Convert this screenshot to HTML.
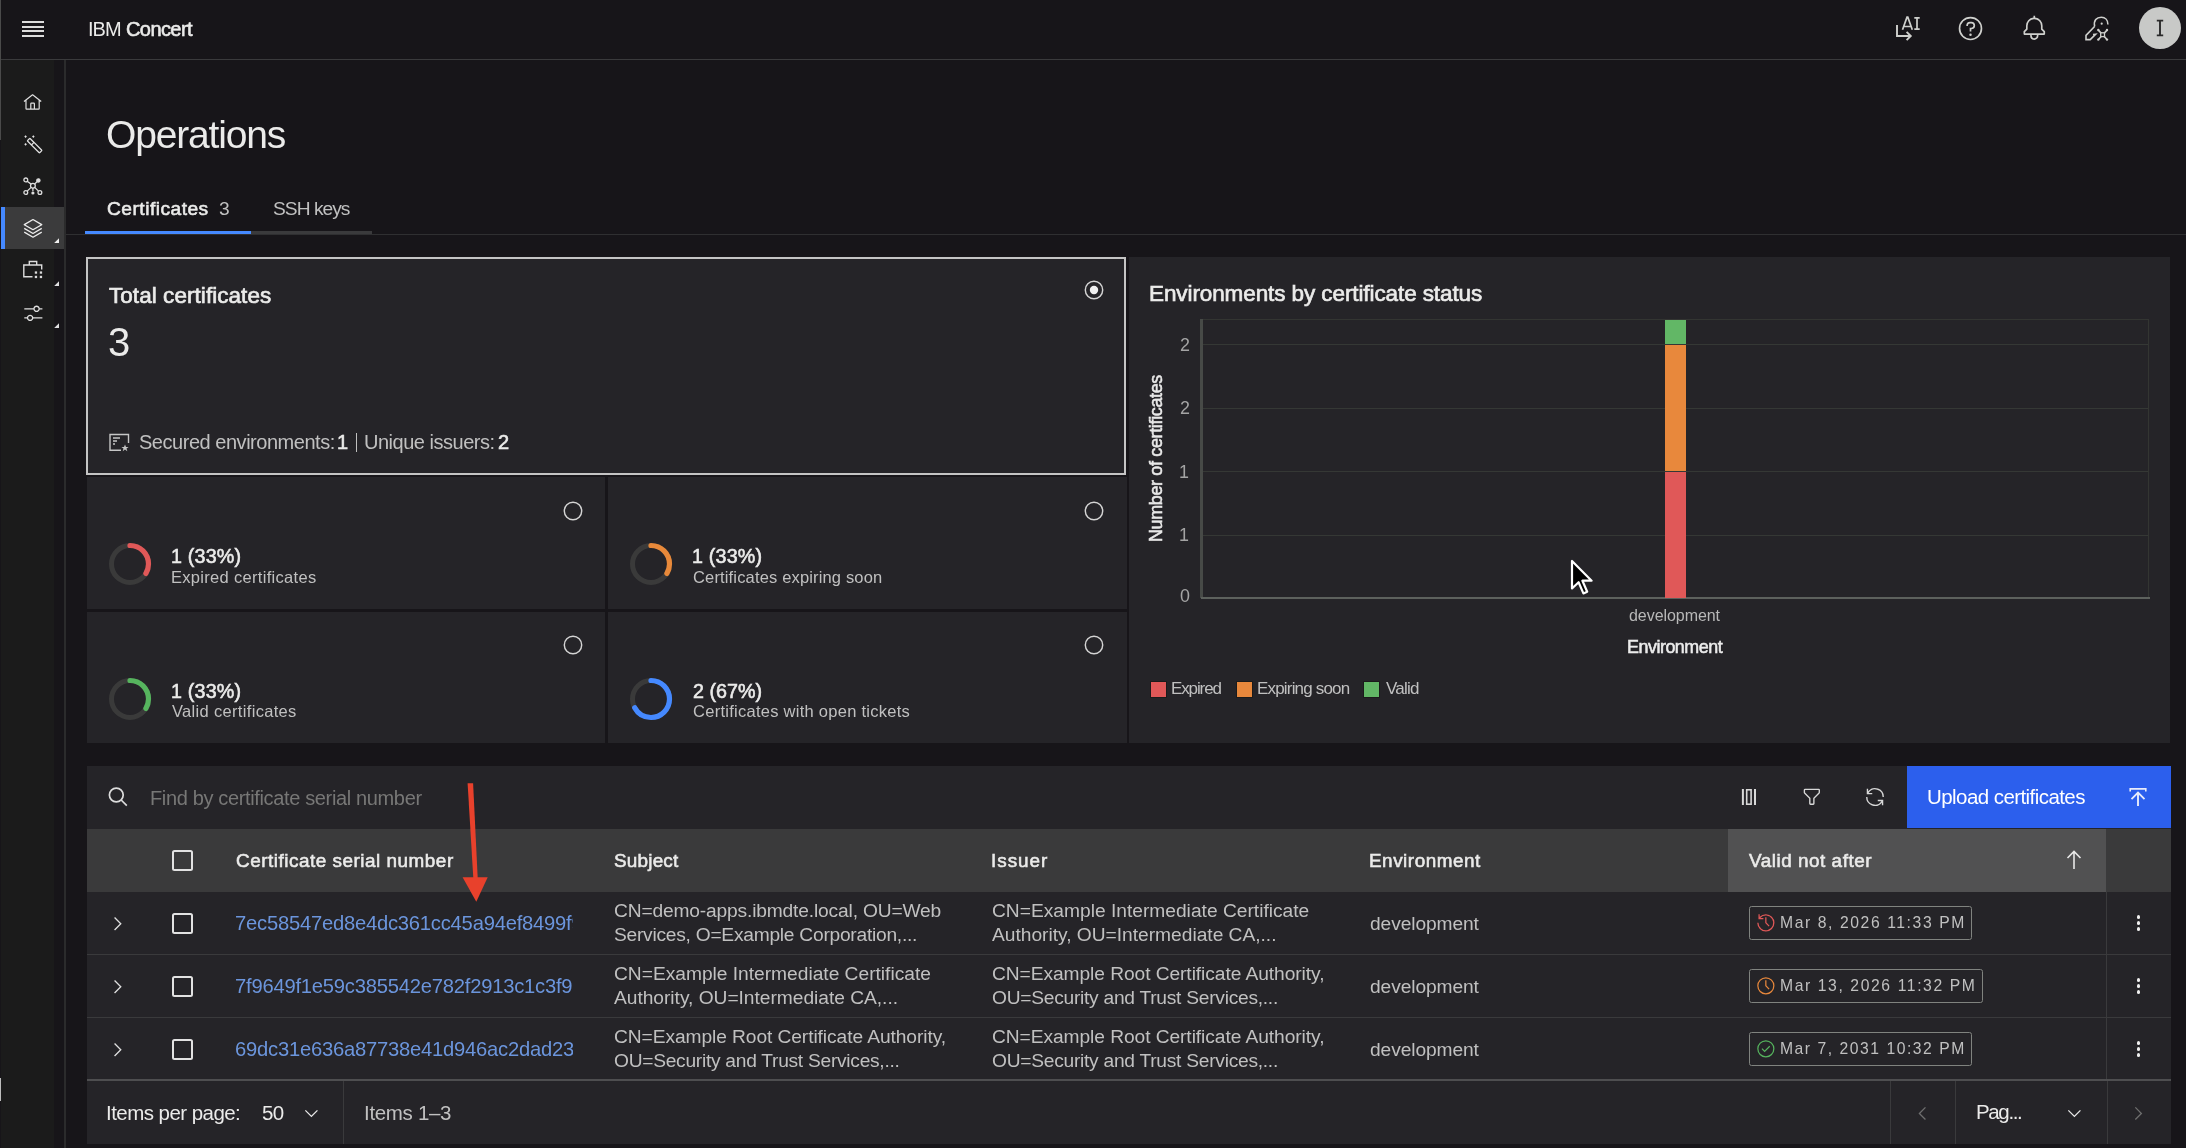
<!DOCTYPE html>
<html><head><meta charset="utf-8"><title>IBM Concert - Operations</title>
<style>
html,body{margin:0;padding:0;width:2186px;height:1148px;overflow:hidden;background:#171519;font-family:"Liberation Sans", sans-serif;}
.t{position:absolute;line-height:0;white-space:nowrap;will-change:transform;}
svg{overflow:visible}
</style></head><body>
<div style="position:absolute;left:0px;top:0px;width:2186px;height:59px;background:#171519;"></div><div style="position:absolute;left:0px;top:59px;width:2186px;height:1px;background:#3a3a3c;"></div><div style="position:absolute;left:0px;top:0px;width:1px;height:140px;background:#4a4a4a;"></div><div style="position:absolute;left:0px;top:1078px;width:1.5px;height:23px;background:#bdbdbd;"></div><div style="position:absolute;left:22px;top:20.5px;width:21.5px;height:2px;background:#dcdcdc;"></div><div style="position:absolute;left:22px;top:25.7px;width:21.5px;height:2px;background:#dcdcdc;"></div><div style="position:absolute;left:22px;top:29.7px;width:21.5px;height:2px;background:#dcdcdc;"></div><div style="position:absolute;left:22px;top:35px;width:21.5px;height:2px;background:#dcdcdc;"></div><div class="t" style="left:87.70px;top:28.60px;font-size:20.00px;font-weight:400;color:#ebebea;letter-spacing:-0.948px;">IBM</div><div class="t" style="left:126.00px;top:28.60px;font-size:20.00px;font-weight:400;-webkit-text-stroke:0.60px #ebebea;color:#ebebea;letter-spacing:-0.579px;">Concert</div>
<svg style="position:absolute;left:1885px;top:8px" width="40" height="40" viewBox="0 0 40 40" fill="none" stroke="#cfd0cd" stroke-width="1.9">
 <path d="M12 17 V28 H25.5"/><path d="M21.6 23.8 L25.8 28 L21.6 32.2"/>
 <path d="M17.5 21.8 L22 9.2 L22.8 9.2 L27.3 21.8 M19 18.5 H25.8" stroke-width="1.7"/>
 <path d="M29.3 9.8 H34.7 M32 9.8 V21.2 M29.3 21.2 H34.7" stroke-width="1.7"/>
</svg>
<svg style="position:absolute;left:1957.40px;top:15.20px;" width="27.00" height="27.00" viewBox="0 0 32 32"><path d="M16 2a14 14 0 1 0 14 14A14 14 0 0 0 16 2zm0 26a12 12 0 1 1 12-12 12 12 0 0 1-12 12zM17 8h-1.5a4.49 4.49 0 0 0-4.5 4.5v.5h2v-.5a2.5 2.5 0 0 1 2.5-2.5H17a2.5 2.5 0 0 1 0 5h-2v4.5h2V17a4.5 4.5 0 0 0 0-9zM16 22a1.5 1.5 0 1 0 0 3 1.5 1.5 0 0 0 0-3z" fill="#cfd0cd"/></svg><svg style="position:absolute;left:2020.50px;top:15.40px;" width="26.60" height="26.60" viewBox="0 0 32 32"><path d="M28.707 19.293L26 16.586V13a10.014 10.014 0 0 0-9-9.95V1h-2v2.05A10.014 10.014 0 0 0 6 13v3.586l-2.707 2.707A1 1 0 0 0 3 20v3a1 1 0 0 0 1 1h7v.777a5.152 5.152 0 0 0 4.5 5.199A5.006 5.006 0 0 0 21 25v-1h7a1 1 0 0 0 1-1v-3a1 1 0 0 0-.293-.707zM19 25a3 3 0 0 1-6 0v-1h6zm8-3H5v-1.586l2.707-2.707A1 1 0 0 0 8 17v-4a8 8 0 0 1 16 0v4a1 1 0 0 0 .293.707L27 20.414z" fill="#cfd0cd"/></svg>
<svg style="position:absolute;left:2080px;top:8px" width="40" height="40" viewBox="0 0 40 40" fill="none" stroke="#cfd0cd" stroke-width="1.6">
 <path d="M14.6 18.2 C13.5 12.5 16.5 9.2 21.3 9.2 C25.3 9.2 27.9 12.3 27.9 16.4"/>
 <circle cx="21.7" cy="15.7" r="1.1" fill="#cfd0cd" stroke="none"/>
 <path d="M14.8 18.2 L6 27.4 V31.6 H10.2 L15.6 26.2 L13 26.5"/>
 <path d="M18.6 22.4 L26.8 31.2 M26.8 22.4 L18.6 31.2"/>
 <circle cx="18.3" cy="22" r="1.2" fill="#cfd0cd" stroke="none"/><circle cx="27" cy="22" r="1.2" fill="#cfd0cd" stroke="none"/>
 <circle cx="18.3" cy="31.6" r="1.2" fill="#cfd0cd" stroke="none"/><circle cx="27" cy="31.6" r="1.2" fill="#cfd0cd" stroke="none"/>
 <rect x="20.7" y="24.8" width="3.8" height="3.8" fill="#161618" stroke="#cfd0cd" stroke-width="1.3"/>
</svg>
<div style="position:absolute;left:2139px;top:7px;width:42px;height:42px;border-radius:50%;background:#c8c9c7"></div>
<svg style="position:absolute;left:2139px;top:7px" width="42" height="42" viewBox="0 0 42 42">
 <path d="M17.8 13.6 H24.2 M21 13.6 V28.4 M17.8 28.4 H24.2" stroke="#2a2a2a" stroke-width="1.9" fill="none"/>
</svg>
<div style="position:absolute;left:1px;top:60px;width:53px;height:1088px;background:#1b1b1b;"></div><div style="position:absolute;left:64px;top:60px;width:1px;height:1088px;background:#171519;"></div><div style="position:absolute;left:64.4px;top:60px;width:1.2px;height:1088px;background:#2b2b2c;"></div><div style="position:absolute;left:1px;top:207px;width:63px;height:42px;background:#3b3b3c;"></div><div style="position:absolute;left:1px;top:207px;width:4px;height:42px;background:#4589ff;"></div><svg style="position:absolute;left:23.20px;top:92.60px;" width="19.20" height="19.20" viewBox="0 0 32 32"><path d="M16.612 2.214a1.01 1.01 0 0 0-1.242 0L1 13.419l1.243 1.572L4 13.621V26a2.004 2.004 0 0 0 2 2h20a2.004 2.004 0 0 0 2-2V13.63L29.757 15 31 13.428zM18 26h-4v-8h4zm2 0v-8a2.002 2.002 0 0 0-2-2h-4a2.002 2.002 0 0 0-2 2v8H6V12.062l10-7.79 10 7.8V26z" fill="#e0e0e0"/></svg><svg style="position:absolute;left:22.50px;top:133.70px;" width="20.70" height="20.70" viewBox="0 0 32 32"><path d="M29.414 24L12 6.586a2.048 2.048 0 0 0-2.828 0L6.586 9.172a2.002 2.002 0 0 0 0 2.828l17.413 17.414a2.002 2.002 0 0 0 2.828 0l2.587-2.586a2 2 0 0 0 0-2.828zM8 10.586L10.586 8l5 5-2.587 2.587-5-5zM25.414 28L14.415 17l2.586-2.587 11 11zM2 16l2-2 2 2-2 2zM14 4l2-2 2 2-2 2zM2 4l2-2 2 2-2 2z" fill="#e0e0e0"/></svg>
<svg style="position:absolute;left:23px;top:176px" width="20" height="20" viewBox="0 0 20 20" fill="none" stroke="#dcdcdc" stroke-width="1.3">
 <circle cx="2.8" cy="3.9" r="1.9"/><circle cx="15.4" cy="4.4" r="1.6" fill="#dcdcdc"/><circle cx="2.8" cy="16.5" r="1.9"/><circle cx="16.9" cy="16.5" r="1.9"/><circle cx="9.9" cy="17" r="1.6" fill="#dcdcdc" stroke="none"/>
 <circle cx="9.9" cy="9.7" r="2.4"/>
 <path d="M4.2 5.3 L8.1 8.1 M14.2 5.5 L11.6 8.1 M4.2 15.1 L8.1 11.4 M15.5 15.1 L11.7 11.4 M9.9 12.1 V15.2"/>
</svg>
<svg style="position:absolute;left:22.90px;top:218.60px;" width="20.00" height="20.00" viewBox="0 0 32 32"><path d="M16 24a.997.997 0 0 1-.496-.132l-14-8 .992-1.736L16 21.848l13.504-7.716.992 1.736-14 8A.997.997 0 0 1 16 24zM16 30a.997.997 0 0 1-.496-.132l-14-8 .992-1.736L16 27.848l13.504-7.716.992 1.736-14 8A.997.997 0 0 1 16 30zM16 18a.997.997 0 0 1-.496-.132l-14-8a1 1 0 0 1 0-1.736l14-8a.998.998 0 0 1 .992 0l14 8a1 1 0 0 1 0 1.736l-14 8A.997.997 0 0 1 16 18zM4.016 9L16 15.848 27.984 9 16 2.152z" fill="#ececec"/></svg>
<svg style="position:absolute;left:23px;top:260px" width="20" height="20" viewBox="0 0 20 20" fill="none" stroke="#dcdcdc" stroke-width="1.4">
 <path d="M6.3 5 V1.5 H13.7 V5"/><path d="M9.5 16.7 H0.8 V5 H18.7 V9.5"/>
 <rect x="11.8" y="11.4" width="2.3" height="2.3" fill="#dcdcdc" stroke="none"/><rect x="16.8" y="11.4" width="2.3" height="2.3" fill="#dcdcdc" stroke="none"/>
 <rect x="11.8" y="15.8" width="2.3" height="2.3" fill="#dcdcdc" stroke="none"/><rect x="16.8" y="15.8" width="2.3" height="2.3" fill="#dcdcdc" stroke="none"/>
</svg>
<svg style="position:absolute;left:22.50px;top:302.80px;" width="20.70" height="20.70" viewBox="0 0 32 32"><path d="M30 8h-4.1c-.5-2.3-2.5-4-4.9-4s-4.4 1.7-4.9 4H2v2h14.1c.5 2.3 2.5 4 4.9 4s4.4-1.7 4.9-4H30V8zm-9 4c-1.7 0-3-1.3-3-3s1.3-3 3-3 3 1.3 3 3-1.3 3-3 3zM2 24h4.1c.5 2.3 2.5 4 4.9 4s4.4-1.7 4.9-4H30v-2H15.9c-.5-2.3-2.5-4-4.9-4s-4.4 1.7-4.9 4H2v2zm9-4c1.7 0 3 1.3 3 3s-1.3 3-3 3-3-1.3-3-3 1.3-3 3-3z" fill="#e0e0e0"/></svg>
<svg style="position:absolute;left:52px;top:236px" width="8" height="8"><path d="M7 2.2 V7 H2.2 Z" fill="#f0f0f0"/></svg>
<svg style="position:absolute;left:52px;top:279px" width="8" height="8"><path d="M7 2.2 V7 H2.2 Z" fill="#e0e0e0"/></svg>
<svg style="position:absolute;left:52px;top:321px" width="8" height="8"><path d="M7 2.2 V7 H2.2 Z" fill="#e0e0e0"/></svg>
<div class="t" style="left:105.70px;top:135.10px;font-size:39.00px;font-weight:400;color:#ebebea;letter-spacing:-1.175px;">Operations</div><div class="t" style="left:106.70px;top:208.90px;font-size:19.20px;font-weight:400;-webkit-text-stroke:0.58px #ebebea;color:#ebebea;letter-spacing:0.475px;">Certificates</div><div class="t" style="left:218.80px;top:208.90px;font-size:19.20px;font-weight:400;color:#c0c0c0;">3</div><div class="t" style="left:273.20px;top:208.90px;font-size:19.20px;font-weight:400;color:#c0c0c0;letter-spacing:-0.977px;">SSH keys</div><div style="position:absolute;left:66px;top:234px;width:2120px;height:1px;background:#2f2f31;"></div><div style="position:absolute;left:85px;top:231px;width:166px;height:3px;background:#4589ff;"></div><div style="position:absolute;left:251px;top:231px;width:121px;height:3px;background:#3a3a3c;"></div><div style="position:absolute;left:86.4px;top:257px;width:1040px;height:218px;background:#252428;box-sizing:border-box;border:2px solid #c4c4c4"></div><div class="t" style="left:109.40px;top:295.50px;font-size:22.50px;font-weight:400;-webkit-text-stroke:0.67px #ebebea;color:#ebebea;letter-spacing:0.055px;">Total certificates</div><div class="t" style="left:108.40px;top:341.60px;font-size:40.00px;font-weight:400;color:#ebebea;">3</div><svg style="position:absolute;left:1081.6px;top:278px" width="24" height="24" viewBox="0 0 24 24"><circle cx="12" cy="12" r="8.7" fill="none" stroke="#d4d4d4" stroke-width="1.45"/><circle cx="12" cy="12" r="4.2" fill="#f0f0f0"/></svg><svg style="position:absolute;left:109px;top:433px" width="21" height="19" viewBox="0 0 21 19" fill="none" stroke="#c6c6c6" stroke-width="1.4">
 <path d="M12 17.3 H1 V1.5 H19.5 V10"/><path d="M4 5 H11 M4 8 H8 M4 11 H6"/>
 <path d="M16 11.5 L17 14 L19.6 14 L17.5 15.6 L18.3 18.2 L16 16.6 L13.7 18.2 L14.5 15.6 L12.4 14 L15 14 Z" fill="#c6c6c6" stroke="none"/>
</svg><div class="t" style="left:138.50px;top:441.60px;font-size:20.00px;font-weight:400;color:#c0c0c0;letter-spacing:-0.470px;">Secured environments:</div><div class="t" style="left:337.20px;top:441.60px;font-size:20.00px;font-weight:400;-webkit-text-stroke:0.60px #ebebea;color:#ebebea;">1</div><div style="position:absolute;left:355.5px;top:433px;width:1.6px;height:19px;background:#c0c0c0;"></div><div class="t" style="left:364.30px;top:441.60px;font-size:20.00px;font-weight:400;color:#c0c0c0;letter-spacing:-0.485px;">Unique issuers:</div><div class="t" style="left:498.20px;top:441.60px;font-size:20.00px;font-weight:400;-webkit-text-stroke:0.60px #ebebea;color:#ebebea;">2</div><div style="position:absolute;left:87px;top:476.6px;width:517.8px;height:132px;background:#252428;"></div><svg style="position:absolute;left:105.1px;top:539.4px" width="50" height="50" viewBox="0 0 50 50"><circle cx="25" cy="25" r="18.5" fill="none" stroke="#3a3a3a" stroke-width="5"/><circle cx="25" cy="25" r="18.5" fill="none" stroke="#e05858" stroke-width="5.2" stroke-linecap="round" stroke-dasharray="38.75 116.24" transform="rotate(-90 25 25)"/></svg><svg style="position:absolute;left:560.8px;top:498.8px" width="24" height="24" viewBox="0 0 24 24"><circle cx="12" cy="12" r="8.7" fill="none" stroke="#d4d4d4" stroke-width="1.45"/></svg><div class="t" style="left:171.10px;top:556.40px;font-size:19.70px;font-weight:400;-webkit-text-stroke:0.59px #ebebea;color:#ebebea;letter-spacing:0.187px;">1 (33%)</div><div class="t" style="left:171.10px;top:577.10px;font-size:16.50px;font-weight:400;color:#c0c0c0;letter-spacing:0.303px;">Expired certificates</div><div style="position:absolute;left:607.8px;top:476.6px;width:519.4px;height:132px;background:#252428;"></div><svg style="position:absolute;left:626.4px;top:539.4px" width="50" height="50" viewBox="0 0 50 50"><circle cx="25" cy="25" r="18.5" fill="none" stroke="#3a3a3a" stroke-width="5"/><circle cx="25" cy="25" r="18.5" fill="none" stroke="#e8893a" stroke-width="5.2" stroke-linecap="round" stroke-dasharray="38.75 116.24" transform="rotate(-90 25 25)"/></svg><svg style="position:absolute;left:1081.6px;top:498.8px" width="24" height="24" viewBox="0 0 24 24"><circle cx="12" cy="12" r="8.7" fill="none" stroke="#d4d4d4" stroke-width="1.45"/></svg><div class="t" style="left:692.40px;top:556.40px;font-size:19.70px;font-weight:400;-webkit-text-stroke:0.59px #ebebea;color:#ebebea;letter-spacing:0.187px;">1 (33%)</div><div class="t" style="left:693.40px;top:577.10px;font-size:16.50px;font-weight:400;color:#c0c0c0;letter-spacing:0.157px;">Certificates expiring soon</div><div style="position:absolute;left:87px;top:611.6px;width:517.8px;height:131.6px;background:#252428;"></div><svg style="position:absolute;left:105.1px;top:673.5px" width="50" height="50" viewBox="0 0 50 50"><circle cx="25" cy="25" r="18.5" fill="none" stroke="#3a3a3a" stroke-width="5"/><circle cx="25" cy="25" r="18.5" fill="none" stroke="#56b45e" stroke-width="5.2" stroke-linecap="round" stroke-dasharray="38.75 116.24" transform="rotate(-90 25 25)"/></svg><svg style="position:absolute;left:560.8px;top:632.7px" width="24" height="24" viewBox="0 0 24 24"><circle cx="12" cy="12" r="8.7" fill="none" stroke="#d4d4d4" stroke-width="1.45"/></svg><div class="t" style="left:171.10px;top:690.50px;font-size:19.70px;font-weight:400;-webkit-text-stroke:0.59px #ebebea;color:#ebebea;letter-spacing:0.187px;">1 (33%)</div><div class="t" style="left:172.10px;top:711.20px;font-size:16.50px;font-weight:400;color:#c0c0c0;letter-spacing:0.320px;">Valid certificates</div><div style="position:absolute;left:607.8px;top:611.6px;width:519.4px;height:131.6px;background:#252428;"></div><svg style="position:absolute;left:626.4px;top:673.5px" width="50" height="50" viewBox="0 0 50 50"><circle cx="25" cy="25" r="18.5" fill="none" stroke="#3a3a3a" stroke-width="5"/><circle cx="25" cy="25" r="18.5" fill="none" stroke="#4589ff" stroke-width="5.2" stroke-linecap="round" stroke-dasharray="77.49 116.24" transform="rotate(-90 25 25)"/></svg><svg style="position:absolute;left:1081.6px;top:632.7px" width="24" height="24" viewBox="0 0 24 24"><circle cx="12" cy="12" r="8.7" fill="none" stroke="#d4d4d4" stroke-width="1.45"/></svg><div class="t" style="left:693.40px;top:690.50px;font-size:19.70px;font-weight:400;-webkit-text-stroke:0.59px #ebebea;color:#ebebea;letter-spacing:0.020px;">2 (67%)</div><div class="t" style="left:693.40px;top:711.20px;font-size:16.50px;font-weight:400;color:#c0c0c0;letter-spacing:0.268px;">Certificates with open tickets</div><div style="position:absolute;left:1129px;top:257px;width:1041px;height:486px;background:#252428;"></div><div class="t" style="left:1148.90px;top:293.70px;font-size:22.50px;font-weight:400;-webkit-text-stroke:0.67px #ebebea;color:#ebebea;letter-spacing:-0.095px;">Environments by certificate status</div><div style="position:absolute;left:1201px;top:319.2px;width:948px;height:1px;background:#333532;"></div><div style="position:absolute;left:2148px;top:319.2px;width:1px;height:278px;background:#333532;"></div><div style="position:absolute;left:1202px;top:344px;width:946px;height:1px;background:#353835;"></div><div style="position:absolute;left:1202px;top:408px;width:946px;height:1px;background:#353835;"></div><div style="position:absolute;left:1202px;top:471px;width:946px;height:1px;background:#353835;"></div><div style="position:absolute;left:1202px;top:534.5px;width:946px;height:1px;background:#353835;"></div><div style="position:absolute;left:1200.3px;top:319.2px;width:2.4px;height:279px;background:#474a47;"></div><div style="position:absolute;left:1200.5px;top:597.3px;width:949px;height:1.6px;background:#5d615d;"></div><div class="t" style="left:1180.40px;top:344.50px;font-size:17.90px;font-weight:400;color:#a4a4a4;">2</div><div class="t" style="left:1180.40px;top:408.00px;font-size:17.90px;font-weight:400;color:#a4a4a4;">2</div><div class="t" style="left:1179.40px;top:471.50px;font-size:17.90px;font-weight:400;color:#a4a4a4;">1</div><div class="t" style="left:1179.40px;top:535.00px;font-size:17.90px;font-weight:400;color:#a4a4a4;">1</div><div class="t" style="left:1180.40px;top:596.10px;font-size:17.90px;font-weight:400;color:#a4a4a4;">0</div><div class="t" style="left:1148.2px;top:542.3px;font-size:17.9px;font-weight:400;-webkit-text-stroke:0.55px #e8e8e8;color:#e8e8e8;transform:rotate(-90deg);transform-origin:0 0;letter-spacing:-0.32px;line-height:17.9px;height:17.9px">Number of certificates</div><div style="position:absolute;left:1665px;top:319.5px;width:21px;height:24.5px;background:#62b766;"></div><div style="position:absolute;left:1665px;top:345px;width:21px;height:126px;background:#e8883c;"></div><div style="position:absolute;left:1665px;top:472px;width:21px;height:126px;background:#e05858;"></div><div class="t" style="left:1628.90px;top:615.50px;font-size:16.00px;font-weight:400;color:#b8b8b8;letter-spacing:-0.057px;">development</div><div class="t" style="left:1626.90px;top:646.60px;font-size:17.90px;font-weight:400;-webkit-text-stroke:0.54px #ececec;color:#ececec;letter-spacing:-0.476px;">Environment</div><div style="position:absolute;left:1151.3px;top:682.3px;width:15px;height:15px;background:#e05858;box-shadow:0 0 0 0.8px #1a1a1a"></div><div class="t" style="left:1171.20px;top:689.20px;font-size:17.00px;font-weight:400;color:#c0c0c0;letter-spacing:-1.114px;">Expired</div><div style="position:absolute;left:1236.7px;top:682.3px;width:15px;height:15px;background:#e8883c;box-shadow:0 0 0 0.8px #1a1a1a"></div><div class="t" style="left:1257.30px;top:689.20px;font-size:17.00px;font-weight:400;color:#c0c0c0;letter-spacing:-0.821px;">Expiring soon</div><div style="position:absolute;left:1364px;top:682.3px;width:15px;height:15px;background:#62b766;box-shadow:0 0 0 0.8px #1a1a1a"></div><div class="t" style="left:1385.60px;top:689.20px;font-size:17.00px;font-weight:400;color:#c0c0c0;letter-spacing:-0.771px;">Valid</div><svg style="position:absolute;left:1568px;top:557px" width="32" height="44" viewBox="0 0 32 44"><path d="M4 4 L4 31.5 L10.6 25.2 L15.4 36.4 L19.2 34.7 L14.4 23.7 L23.6 23.7 Z" fill="#000" stroke="#fff" stroke-width="2.2" stroke-linejoin="round"/></svg><div style="position:absolute;left:87px;top:765.5px;width:2083.5px;height:63px;background:#252428;"></div><svg style="position:absolute;left:105px;top:784px" width="26" height="26" viewBox="0 0 26 26" fill="none" stroke="#dcdcdc" stroke-width="1.7"><circle cx="11.3" cy="11" r="6.9"/><path d="M16.2 16 L21.8 21.6"/></svg><div class="t" style="left:149.60px;top:797.60px;font-size:20.00px;font-weight:400;color:#777776;letter-spacing:-0.356px;">Find by certificate serial number</div><svg style="position:absolute;left:1739px;top:787px" width="20" height="20" viewBox="0 0 20 20" fill="#d8d8d8"><rect x="2.9" y="2" width="2" height="16"/><rect x="15" y="2" width="2" height="16"/><rect x="7.7" y="2.8" width="4.4" height="14.4" fill="none" stroke="#d8d8d8" stroke-width="1.6"/></svg><svg style="position:absolute;left:1801.20px;top:786.30px;" width="21.70" height="21.70" viewBox="0 0 32 32"><path d="M18 28h-4a2 2 0 0 1-2-2v-7.59L4.59 11A2 2 0 0 1 4 9.59V6a2 2 0 0 1 2-2h20a2 2 0 0 1 2 2v3.59a2 2 0 0 1-.59 1.41L20 18.41V26a2 2 0 0 1-2 2zM6 6v3.59l8 8V26h4v-8.41l8-8V6z" fill="#d8d8d8"/></svg><svg style="position:absolute;left:1863.90px;top:785.90px;" width="22.00" height="22.00" viewBox="0 0 32 32"><path d="M12 10H6.78A11 11 0 0 1 27 16h2A13 13 0 0 0 6 7.68V4H4v8h8zM20 22h5.22A11 11 0 0 1 5 16H3a13 13 0 0 0 23 8.32V28h2V20H20z" fill="#d8d8d8"/></svg><div style="position:absolute;left:1906.5px;top:765.5px;width:264px;height:62.5px;background:#2c5fed;"></div><div class="t" style="left:1926.80px;top:797.20px;font-size:20.50px;font-weight:400;color:#ffffff;letter-spacing:-0.566px;">Upload certificates</div><svg style="position:absolute;left:2127px;top:786px" width="22" height="22" viewBox="0 0 22 22" fill="none" stroke="#e8ecfa"><path d="M3.2 5.6 V2.9 H18.8 V5.6" stroke-width="1.6"/><path d="M11 6.8 V20" stroke-width="1.9"/><path d="M4.5 13.2 L11 6.6 L17.5 13.2" stroke-width="1.8"/></svg><div style="position:absolute;left:87px;top:828.5px;width:2083.5px;height:63px;background:#3a3a3b;"></div><div style="position:absolute;left:1728px;top:828.5px;width:378px;height:63px;background:#515152;"></div><div style="position:absolute;left:172px;top:849.5px;width:21px;height:21px;box-sizing:border-box;border:2px solid #e2e2e2;border-radius:2.5px"></div><div class="t" style="left:236.00px;top:861.40px;font-size:18.90px;font-weight:400;-webkit-text-stroke:0.57px #ebebea;color:#ebebea;letter-spacing:0.519px;">Certificate serial number</div><div class="t" style="left:614.00px;top:861.40px;font-size:18.90px;font-weight:400;-webkit-text-stroke:0.57px #ebebea;color:#ebebea;letter-spacing:0.207px;">Subject</div><div class="t" style="left:991.00px;top:861.40px;font-size:18.90px;font-weight:400;-webkit-text-stroke:0.57px #ebebea;color:#ebebea;letter-spacing:0.970px;">Issuer</div><div class="t" style="left:1369.00px;top:861.40px;font-size:18.90px;font-weight:400;-webkit-text-stroke:0.57px #ebebea;color:#ebebea;letter-spacing:0.520px;">Environment</div><div class="t" style="left:1748.80px;top:861.40px;font-size:18.90px;font-weight:400;-webkit-text-stroke:0.57px #ebebea;color:#ebebea;letter-spacing:0.524px;">Valid not after</div><svg style="position:absolute;left:2064px;top:849px" width="20" height="22" viewBox="0 0 20 22" fill="none" stroke="#e8e8e8" stroke-width="1.6"><path d="M10 2.5 V20 M3.5 9 L10 2.5 L16.5 9"/></svg><div style="position:absolute;left:87px;top:891.5px;width:2083.5px;height:62px;background:#252428;"></div><div style="position:absolute;left:87px;top:953.5px;width:2083.5px;height:1px;background:#3a3a3c;"></div><div style="position:absolute;left:2106.3px;top:891.5px;width:1px;height:63px;background:#3a3a3c;"></div><svg style="position:absolute;left:106.60px;top:912.60px;" width="21.40" height="21.40" viewBox="0 0 32 32"><path d="M22 16L12 26l-1.4-1.4 8.6-8.6-8.6-8.6L12 6z" fill="#e0e0e0"/></svg><div style="position:absolute;left:172px;top:912.5px;width:21px;height:21px;box-sizing:border-box;border:2px solid #e2e2e2;border-radius:2.5px"></div><div style="position:absolute;left:230px;top:901.5px;width:343px;height:40px;overflow:hidden"><div class="t" style="left:5.00px;top:21.00px;font-size:20.20px;font-weight:400;color:#6b95dc;letter-spacing:-0.22px;">7ec58547ed8e4dc361cc45a94ef8499f9a1b</div></div><div class="t" style="left:614.30px;top:911.30px;font-size:19.20px;font-weight:400;color:#c0c0c0;letter-spacing:-0.160px;">CN=demo-apps.ibmdte.local, OU=Web</div><div class="t" style="left:614.30px;top:934.80px;font-size:19.20px;font-weight:400;color:#c0c0c0;letter-spacing:-0.250px;">Services, O=Example Corporation,...</div><div class="t" style="left:992.00px;top:911.30px;font-size:19.20px;font-weight:400;color:#c0c0c0;">CN=Example Intermediate Certificate</div><div class="t" style="left:992.00px;top:934.80px;font-size:19.20px;font-weight:400;color:#c0c0c0;letter-spacing:-0.012px;">Authority, OU=Intermediate CA,...</div><div class="t" style="left:1370.00px;top:923.50px;font-size:19.20px;font-weight:400;color:#c0c0c0;letter-spacing:-0.094px;">development</div><div style="position:absolute;left:1749.4px;top:906.3px;width:223px;height:33.5px;box-sizing:border-box;border:1.3px solid #80837f;border-radius:2.5px"></div><svg style="position:absolute;left:1756.15px;top:913.05px;" width="19.70" height="19.70" viewBox="0 0 32 32"><path d="M20.59 22L15 16.41V7h2v8.58l5 5.01L20.59 22zM16 2A13.94 13.94 0 0 0 6 6.23V2H4v8h8V8H7.08A12 12 0 1 1 4 16H2A14 14 0 1 0 16 2z" fill="#e05858"/></svg><div class="t" style="left:1780.40px;top:922.70px;font-size:15.70px;font-weight:400;color:#c0c0c0;letter-spacing:1.590px;">Mar 8, 2026 11:33 PM</div><div style="position:absolute;left:2137.1px;top:915.4px;width:3.2px;height:3.2px;border-radius:50%;background:#f0f0f0"></div><div style="position:absolute;left:2137.1px;top:921.4px;width:3.2px;height:3.2px;border-radius:50%;background:#f0f0f0"></div><div style="position:absolute;left:2137.1px;top:927.4px;width:3.2px;height:3.2px;border-radius:50%;background:#f0f0f0"></div><div style="position:absolute;left:87px;top:954.5px;width:2083.5px;height:62px;background:#252428;"></div><div style="position:absolute;left:87px;top:1016.5px;width:2083.5px;height:1px;background:#3a3a3c;"></div><div style="position:absolute;left:2106.3px;top:954.5px;width:1px;height:63px;background:#3a3a3c;"></div><svg style="position:absolute;left:106.60px;top:975.60px;" width="21.40" height="21.40" viewBox="0 0 32 32"><path d="M22 16L12 26l-1.4-1.4 8.6-8.6-8.6-8.6L12 6z" fill="#e0e0e0"/></svg><div style="position:absolute;left:172px;top:975.5px;width:21px;height:21px;box-sizing:border-box;border:2px solid #e2e2e2;border-radius:2.5px"></div><div style="position:absolute;left:230px;top:964.5px;width:343px;height:40px;overflow:hidden"><div class="t" style="left:5.00px;top:21.00px;font-size:20.20px;font-weight:400;color:#6b95dc;letter-spacing:-0.22px;">7f9649f1e59c385542e782f2913c1c3f9e2c</div></div><div class="t" style="left:614.30px;top:974.30px;font-size:19.20px;font-weight:400;color:#c0c0c0;letter-spacing:-0.011px;">CN=Example Intermediate Certificate</div><div class="t" style="left:614.30px;top:997.80px;font-size:19.20px;font-weight:400;color:#c0c0c0;letter-spacing:-0.027px;">Authority, OU=Intermediate CA,...</div><div class="t" style="left:992.00px;top:974.30px;font-size:19.20px;font-weight:400;color:#c0c0c0;letter-spacing:-0.069px;">CN=Example Root Certificate Authority,</div><div class="t" style="left:992.00px;top:997.80px;font-size:19.20px;font-weight:400;color:#c0c0c0;letter-spacing:-0.260px;">OU=Security and Trust Services,...</div><div class="t" style="left:1370.00px;top:986.50px;font-size:19.20px;font-weight:400;color:#c0c0c0;letter-spacing:-0.094px;">development</div><div style="position:absolute;left:1749.4px;top:969.3px;width:233.5px;height:33.5px;box-sizing:border-box;border:1.3px solid #80837f;border-radius:2.5px"></div><svg style="position:absolute;left:1756.15px;top:976.05px;" width="19.70" height="19.70" viewBox="0 0 32 32"><path d="M16 30a14 14 0 1 1 14-14 14 14 0 0 1-14 14zm0-26a12 12 0 1 0 12 12A12 12 0 0 0 16 4zM20.59 22L15 16.41V7h2v8.58l5 5.01L20.59 22z" fill="#e8883c"/></svg><div class="t" style="left:1780.40px;top:985.70px;font-size:15.70px;font-weight:400;color:#c0c0c0;letter-spacing:1.604px;">Mar 13, 2026 11:32 PM</div><div style="position:absolute;left:2137.1px;top:978.4px;width:3.2px;height:3.2px;border-radius:50%;background:#f0f0f0"></div><div style="position:absolute;left:2137.1px;top:984.4px;width:3.2px;height:3.2px;border-radius:50%;background:#f0f0f0"></div><div style="position:absolute;left:2137.1px;top:990.4px;width:3.2px;height:3.2px;border-radius:50%;background:#f0f0f0"></div><div style="position:absolute;left:87px;top:1017.5px;width:2083.5px;height:62px;background:#252428;"></div><div style="position:absolute;left:2106.3px;top:1017.5px;width:1px;height:63px;background:#3a3a3c;"></div><svg style="position:absolute;left:106.60px;top:1038.60px;" width="21.40" height="21.40" viewBox="0 0 32 32"><path d="M22 16L12 26l-1.4-1.4 8.6-8.6-8.6-8.6L12 6z" fill="#e0e0e0"/></svg><div style="position:absolute;left:172px;top:1038.5px;width:21px;height:21px;box-sizing:border-box;border:2px solid #e2e2e2;border-radius:2.5px"></div><div style="position:absolute;left:230px;top:1027.5px;width:343px;height:40px;overflow:hidden"><div class="t" style="left:5.00px;top:21.00px;font-size:20.20px;font-weight:400;color:#6b95dc;letter-spacing:-0.22px;">69dc31e636a87738e41d946ac2dad23f8c1</div></div><div class="t" style="left:614.30px;top:1037.30px;font-size:19.20px;font-weight:400;color:#c0c0c0;letter-spacing:-0.080px;">CN=Example Root Certificate Authority,</div><div class="t" style="left:614.30px;top:1060.80px;font-size:19.20px;font-weight:400;color:#c0c0c0;letter-spacing:-0.272px;">OU=Security and Trust Services,...</div><div class="t" style="left:992.00px;top:1037.30px;font-size:19.20px;font-weight:400;color:#c0c0c0;letter-spacing:-0.069px;">CN=Example Root Certificate Authority,</div><div class="t" style="left:992.00px;top:1060.80px;font-size:19.20px;font-weight:400;color:#c0c0c0;letter-spacing:-0.260px;">OU=Security and Trust Services,...</div><div class="t" style="left:1370.00px;top:1049.50px;font-size:19.20px;font-weight:400;color:#c0c0c0;letter-spacing:-0.094px;">development</div><div style="position:absolute;left:1749.4px;top:1032.3px;width:223px;height:33.5px;box-sizing:border-box;border:1.3px solid #80837f;border-radius:2.5px"></div><svg style="position:absolute;left:1756.15px;top:1039.05px;" width="19.70" height="19.70" viewBox="0 0 32 32"><path d="M14 21.414l-5-5.001L10.413 15 14 18.586 21.585 11 23 12.415l-9 8.999zM16 2a14 14 0 1 0 14 14A14 14 0 0 0 16 2zm0 26a12 12 0 1 1 12-12 12 12 0 0 1-12 12z" fill="#56b45e"/></svg><div class="t" style="left:1780.40px;top:1048.70px;font-size:15.70px;font-weight:400;color:#c0c0c0;letter-spacing:1.529px;">Mar 7, 2031 10:32 PM</div><div style="position:absolute;left:2137.1px;top:1041.4px;width:3.2px;height:3.2px;border-radius:50%;background:#f0f0f0"></div><div style="position:absolute;left:2137.1px;top:1047.4px;width:3.2px;height:3.2px;border-radius:50%;background:#f0f0f0"></div><div style="position:absolute;left:2137.1px;top:1053.4px;width:3.2px;height:3.2px;border-radius:50%;background:#f0f0f0"></div><div style="position:absolute;left:87px;top:1079.4px;width:2083.5px;height:1.7px;background:#4e4e50;"></div><div style="position:absolute;left:87px;top:1080.9px;width:2083.5px;height:63px;background:#252428;"></div><div class="t" style="left:106.40px;top:1112.90px;font-size:20.50px;font-weight:400;color:#ebebea;letter-spacing:-0.546px;">Items per page:</div><div class="t" style="left:262.10px;top:1112.90px;font-size:20.50px;font-weight:400;color:#ebebea;letter-spacing:-0.701px;">50</div><svg style="position:absolute;left:300.80px;top:1102.70px;" width="20.80" height="20.80" viewBox="0 0 32 32"><path d="M16 22L6 12l1.4-1.4 8.6 8.6 8.6-8.6L26 12z" fill="#e8e8e8"/></svg><div style="position:absolute;left:343px;top:1081px;width:1px;height:63px;background:#3a3a3c;"></div><div class="t" style="left:363.60px;top:1112.90px;font-size:20.50px;font-weight:400;color:#c0c0c0;letter-spacing:-0.315px;">Items 1–3</div><div style="position:absolute;left:1890px;top:1081px;width:1px;height:63px;background:#3a3a3c;"></div><div style="position:absolute;left:1954.5px;top:1081px;width:1px;height:63px;background:#3a3a3c;"></div><div style="position:absolute;left:2106.5px;top:1081px;width:1px;height:63px;background:#3a3a3c;"></div><div class="t" style="left:1975.60px;top:1112.20px;font-size:20.50px;font-weight:400;color:#ebebea;letter-spacing:-1.353px;">Pag...</div><svg style="position:absolute;left:2064.10px;top:1102.60px;" width="20.80" height="20.80" viewBox="0 0 32 32"><path d="M16 22L6 12l1.4-1.4 8.6 8.6 8.6-8.6L26 12z" fill="#e8e8e8"/></svg><svg style="position:absolute;left:1912.00px;top:1103.10px;" width="20.80" height="20.80" viewBox="0 0 32 32"><path d="M10 16L20 6l1.4 1.4-8.6 8.6 8.6 8.6L20 26z" fill="#6f6f6f"/></svg><svg style="position:absolute;left:2127.90px;top:1103.10px;" width="20.80" height="20.80" viewBox="0 0 32 32"><path d="M22 16L12 26l-1.4-1.4 8.6-8.6-8.6-8.6L12 6z" fill="#6f6f6f"/></svg><svg style="position:absolute;left:0px;top:0px;width:2186px;height:1148px;pointer-events:none" width="2186" height="1148" viewBox="0 0 2186 1148"><path d="M467.6 783.2 L473.1 783.2 L477.7 878 L473.3 878 Z" fill="#e8412c"/><path d="M462.6 877.3 L487.7 877.3 L476.3 901.8 Z" fill="#e8412c"/></svg>
</body></html>
